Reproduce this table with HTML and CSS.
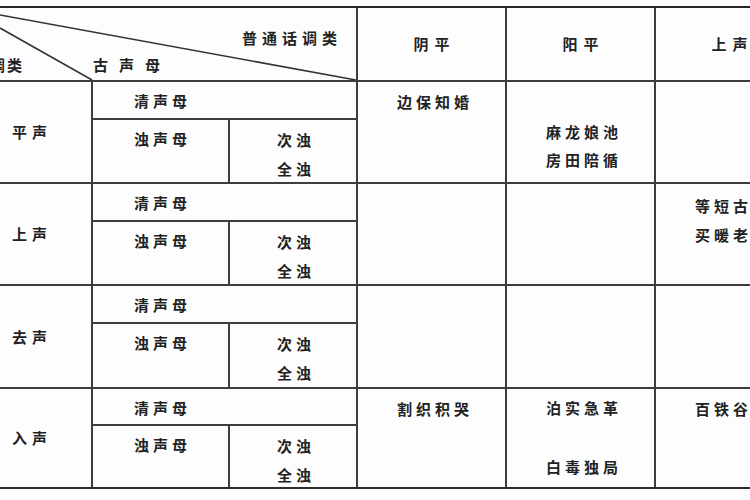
FILE: index.html
```html
<!DOCTYPE html>
<html lang="zh-CN">
<head>
<meta charset="utf-8">
<title>古今声调对照表</title>
<link rel="stylesheet" href="styles.css">
</head>
<body>
<div class="page">
  <div class="table">
    <div class="c diag">
      <svg class="diag-lines" viewBox="0 0 356 72" preserveAspectRatio="none" aria-hidden="true">
        <line x1="0" y1="7" x2="356" y2="72"/>
        <line x1="0" y1="20" x2="92" y2="72"/>
      </svg>
      <div class="diag-top">普通话调类</div>
      <div class="diag-bottom"><span class="tl">调类</span><span class="gs">古声母</span></div>
    </div>
    <div class="c th">阴平</div>
    <div class="c th">阳平</div>
    <div class="c th">上声</div>

    <div class="c tone">平声</div>
    <div class="c qing">清声母</div>
    <div class="c data">边保知婚</div>
    <div class="c data yang1"><div>麻龙娘池</div><div>房田陪循</div></div>
    <div class="c data"></div>
    <div class="c zhuo">浊声母</div>
    <div class="c cz"><div>次浊</div><div>全浊</div></div>

    <div class="c tone">上声</div>
    <div class="c qing">清声母</div>
    <div class="c data"></div>
    <div class="c data"></div>
    <div class="c data shang2"><div>等短古</div><div>买暖老</div></div>
    <div class="c zhuo">浊声母</div>
    <div class="c cz"><div>次浊</div><div>全浊</div></div>

    <div class="c tone">去声</div>
    <div class="c qing">清声母</div>
    <div class="c data"></div>
    <div class="c data"></div>
    <div class="c data"></div>
    <div class="c zhuo">浊声母</div>
    <div class="c cz"><div>次浊</div><div>全浊</div></div>

    <div class="c tone">入声</div>
    <div class="c qing">清声母</div>
    <div class="c data">割织积哭</div>
    <div class="c data ru2"><div>泊实急革</div><div class="second">白毒独局</div></div>
    <div class="c data">百铁谷</div>
    <div class="c zhuo">浊声母</div>
    <div class="c cz"><div>次浊</div><div>全浊</div></div>
  </div>
</div>
</body>
</html>
```

FILE: styles.css
```css
html, body {
  margin: 0;
  padding: 0;
  background: #fff;
}

.page {
  width: 750px;
  height: 500px;
  overflow: hidden;
  background: #fdfdfd;
}

.table {
  display: grid;
  width: max-content;
  grid-template-columns: 91px 135px 126px 147px 147px 147px;
  grid-template-rows: 72px 36px 62px 36px 62px 36px 63px 35px 61px;
  gap: 2px;
  margin-top: 6px;
  background: #3d3d3d;
  border-top: 2px solid #262626;
  border-bottom: 2px solid #2e2e2e;
}

.c {
  background: #fdfdfd;
  color: #222;
  font-family: "Noto Sans CJK SC", "Noto Sans CJK TC", sans-serif;
  font-weight: 700;
  font-size: 15px;
  line-height: 20px;
  letter-spacing: 4px;
  white-space: nowrap;
  overflow: hidden;
}

.diag {
  grid-column: span 3;
  position: relative;
  padding-top: 20px;
  box-sizing: border-box;
}

.diag-lines {
  position: absolute;
  left: 0;
  top: 0;
  width: 100%;
  height: 100%;
  stroke: #333;
  stroke-width: 1.6;
  fill: none;
}

.diag-top {
  position: relative;
  text-align: right;
  padding-right: 14px;
  letter-spacing: 5px;
}

.diag-bottom {
  position: relative;
  display: flex;
  margin-top: 7px;
}

.diag-bottom .tl {
  flex: none;
  width: 103px;
  margin-left: -10px;
  letter-spacing: 2px;
}

.diag-bottom .gs {
  letter-spacing: 11px;
}

.th {
  display: flex;
  align-items: center;
  justify-content: center;
  letter-spacing: 6px;
  padding-left: 6px;
}

.tone {
  grid-row: span 2;
  display: flex;
  align-items: center;
  padding-left: 12px;
  letter-spacing: 5px;
}

.qing {
  grid-column: span 2;
  padding: 9px 0 0 41px;
}

.zhuo {
  padding: 9px 0 0 41px;
}

.cz {
  padding: 5px 0 0 47px;
  line-height: 29px;
}

.data {
  grid-row: span 2;
  padding: 10px 0 0 39px;
}

.yang1 {
  padding-top: 36px;
  line-height: 28px;
}

.shang2 {
  padding-top: 7px;
  line-height: 29px;
}

.ru2 {
  padding-top: 9px;
}

.ru2 .second {
  margin-top: 39px;
}
```
